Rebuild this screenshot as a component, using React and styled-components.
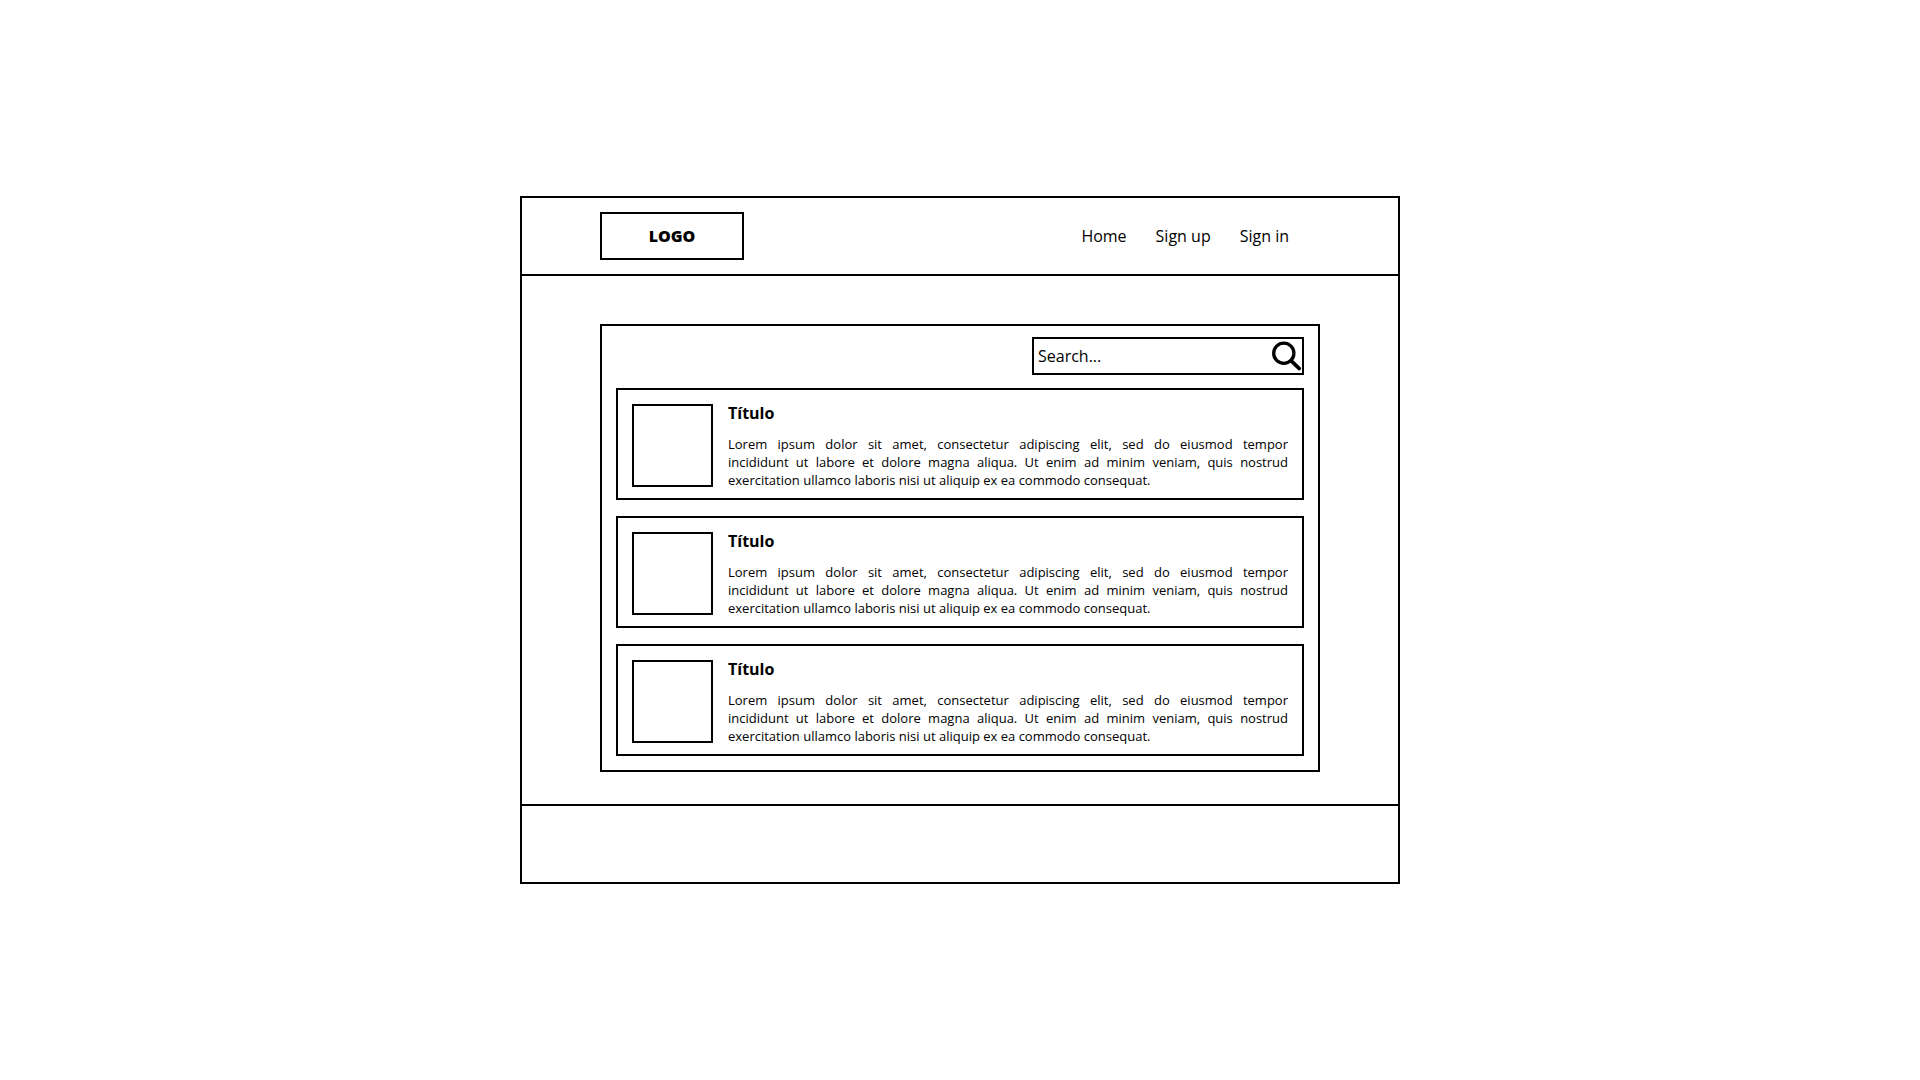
import React from "react";
import styled, { createGlobalStyle } from "styled-components";

const GlobalStyle = createGlobalStyle`
  *, *::before, *::after { box-sizing: border-box; }
  body {
    margin: 0;
    background: #fff;
    color: #000;
    font: 16px/22px "Open Sans", "Noto Sans", sans-serif;
  }
`;

const Page = styled.div`
  min-height: 100vh;
  display: flex;
  align-items: center;
  justify-content: center;
`;

const Frame = styled.div`
  width: 100%;
  max-width: 880px;
  border: 2px solid #000;
`;

const Header = styled.header`
  display: flex;
  align-items: center;
  justify-content: space-between;
  padding: 14px 109px 14px 78px;
  border-bottom: 2px solid #000;
`;

const Logo = styled.a`
  width: 144px;
  padding: 11px;
  border: 2px solid #000;
  color: inherit;
  font-weight: 800;
  text-align: center;
  text-decoration: none;
`;

const Nav = styled.nav`
  display: flex;
  gap: 29px;
`;

const NavLink = styled.a`
  color: inherit;
  text-decoration: none;
`;

const Main = styled.main`
  padding: 48px 78px 32px;
`;

const Panel = styled.section`
  display: flex;
  flex-direction: column;
  gap: 13px;
  padding: 11px 14px 14px;
  border: 2px solid #000;
`;

const SearchBox = styled.form`
  display: flex;
  align-items: center;
  align-self: flex-end;
  width: 272px;
  height: 38px;
  padding-left: 4px;
  border: 2px solid #000;
`;

const SearchInput = styled.input`
  flex: 1;
  min-width: 0;
  padding: 0;
  border: 0;
  outline: 0;
  background: transparent;
  color: inherit;
  font: inherit;
  &::placeholder { color: #000; opacity: 1; }
`;

const SearchButton = styled.button`
  display: flex;
  padding: 0;
  border: 0;
  background: none;
  color: inherit;
`;

const List = styled.div`
  display: flex;
  flex-direction: column;
  gap: 16px;
`;

const Card = styled.article`
  display: flex;
  gap: 15px;
  min-height: 112px;
  padding: 12px 14px 8px;
  border: 2px solid #000;
`;

const Thumb = styled.div`
  flex: none;
  width: 81px;
  height: 83px;
  margin-top: 2px;
  border: 2px solid #000;
`;

const CardBody = styled.div`
  flex: 1;
  min-width: 0;
`;

const Title = styled.h2`
  margin: 0 0 11px;
  font-size: 16px;
  line-height: 22px;
  font-weight: 700;
`;

const Text = styled.p`
  margin: 0;
  font-size: 13px;
  line-height: 18px;
  text-align: justify;
`;

const Footer = styled.footer`
  height: 78px;
  border-top: 2px solid #000;
`;

const links = ["Home", "Sign up", "Sign in"];
const items = [1, 2, 3];

function SearchIcon() {
  return (
    <svg width="32" height="32" viewBox="0 0 32 32" fill="none" stroke="currentColor" aria-hidden="true">
      <circle cx="13.8" cy="13.3" r="10.1" strokeWidth="3.3" />
      <path d="M21 20.6 29.3 28.6" strokeWidth="3.6" strokeLinecap="round" />
    </svg>
  );
}

export default function App() {
  return (
    <>
      <GlobalStyle />
      <Page>
        <Frame>
          <Header>
            <Logo href="#">LOGO</Logo>
            <Nav>
              {links.map((label) => (
                <NavLink key={label} href="#">{label}</NavLink>
              ))}
            </Nav>
          </Header>
          <Main>
            <Panel>
              <SearchBox role="search">
                <SearchInput type="text" placeholder="Search..." aria-label="Search" />
                <SearchButton type="button" aria-label="Search">
                  <SearchIcon />
                </SearchButton>
              </SearchBox>
              <List>
                {items.map((id) => (
                  <Card key={id}>
                    <Thumb />
                    <CardBody>
                      <Title>Título</Title>
                      <Text>
                        Lorem ipsum dolor sit amet, consectetur adipiscing elit, sed do eiusmod
                        tempor incididunt&nbsp;ut labore et dolore magna aliqua. Ut enim ad minim
                        veniam, quis nostrud exercitation ullamco laboris nisi ut aliquip ex ea
                        commodo consequat.
                      </Text>
                    </CardBody>
                  </Card>
                ))}
              </List>
            </Panel>
          </Main>
          <Footer />
        </Frame>
      </Page>
    </>
  );
}
